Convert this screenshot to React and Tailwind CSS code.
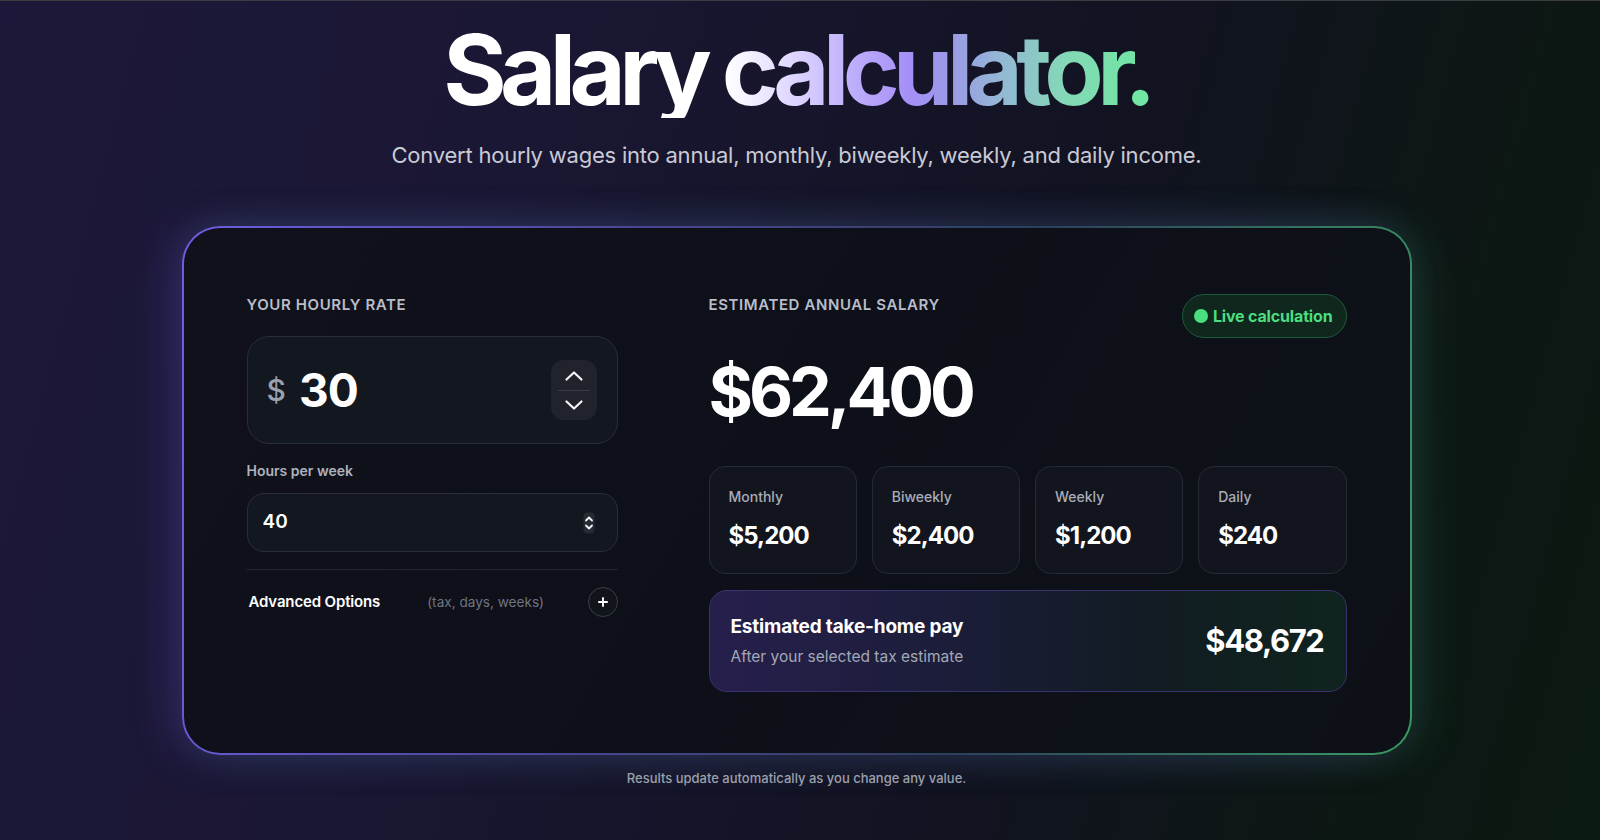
import React from 'react';
import { Plus } from 'lucide-react';

const stats = [
  { label: 'Monthly', value: '$5,200' },
  { label: 'Biweekly', value: '$2,400' },
  { label: 'Weekly', value: '$1,200' },
  { label: 'Daily', value: '$240' },
];

const Chevron = ({ down }) => (
  <svg width="20" height="12" viewBox="0 0 20 12" fill="none">
    <path
      d={down ? 'M2.5 2.5 L10 9.5 L17.5 2.5' : 'M2.5 9.5 L10 2.5 L17.5 9.5'}
      stroke="#f4f5f8"
      strokeWidth="2.2"
      strokeLinecap="round"
      strokeLinejoin="round"
    />
  </svg>
);

const TinySpinner = () => (
  <svg width="12" height="22" viewBox="0 0 12 22" fill="none">
    <rect x="0.5" y="0.5" width="11" height="21" rx="4" fill="#272a33" />
    <path d="M3 8.5 L6 5.5 L9 8.5" stroke="#f1f3f7" strokeWidth="1.8" strokeLinecap="round" strokeLinejoin="round" />
    <path d="M3 13.5 L6 16.5 L9 13.5" stroke="#f1f3f7" strokeWidth="1.8" strokeLinecap="round" strokeLinejoin="round" />
  </svg>
);

const App = () => {
  return (
    <div className="min-h-[840px] w-full border-t border-[#3b3b42] bg-[linear-gradient(105deg,#1d1839_0%,#1a1734_30%,#121322_62%,#0d1714_85%,#0b1a12_100%)] pr-[7px] font-['Inter',sans-serif] text-white">
      {/* Heading */}
      <div className="flex flex-col items-center pt-[20px]">
        <h1 className="bg-[linear-gradient(90deg,#ffffff_0%,#ffffff_40%,#e0d8ff_49%,#bba9fb_59%,#a58ff7_66%,#9b9be6_72%,#93b8d4_79%,#84d8b6_88%,#6ee7a0_100%)] bg-clip-text text-[97px] font-bold leading-[97px] tracking-[-0.068em] text-transparent">
          Salary calculator.
        </h1>
        <p className="mt-[23px] text-[22px] leading-[28px] tracking-[-0.01em] text-[#c9cad6]">
          Convert hourly wages into annual, monthly, biweekly, weekly, and daily income.
        </p>
      </div>

      {/* Card */}
      <div className="mx-auto mt-[57px] w-[1230px] rounded-[38px] bg-[linear-gradient(100deg,#6e5de2_0%,#4a4694_35%,#2d3f5c_65%,#3a9b63_100%)] p-[2px] shadow-[-14px_0_40px_rgba(110,92,230,0.22),14px_0_40px_rgba(58,160,100,0.18)]">
        <div className="grid h-[525px] grid-cols-[371px_1fr] gap-[91px] rounded-[36px] bg-[linear-gradient(120deg,#10111b_0%,#0e1019_50%,#0d1117_100%)] px-[63px] pt-[67px]">
          {/* Left column */}
          <div className="flex flex-col">
            <div className="text-[15px] font-semibold leading-5 tracking-[0.04em] text-[#b9bdc9]">YOUR HOURLY RATE</div>

            <div className="mt-[21px] flex h-[108px] items-center rounded-[22px] border border-[#2a2e38] bg-[#131720] pl-[19px] pr-[20px]">
              <span className="text-[30px] font-medium text-[#9aa0ae]">$</span>
              <span className="ml-[13px] text-[46px] font-bold tracking-[-0.02em] text-white">30</span>
              <div className="ml-auto flex h-[60px] w-[46px] flex-col items-center justify-center rounded-[13px] bg-[#20232c]">
                <Chevron />
                <div className="my-[8px] h-px w-[32px] bg-[#3a3d46]" />
                <Chevron down />
              </div>
            </div>

            <div className="mt-[17px] text-[14px] font-semibold leading-5 text-[#aeb2be]">Hours per week</div>

            <div className="mt-3 flex h-[59px] items-center rounded-[17px] border border-[#2a2e38] bg-[#131720] pl-[15px] pr-[22px]">
              <span className="text-[19px] font-semibold text-white">40</span>
              <div className="ml-auto">
                <TinySpinner />
              </div>
            </div>

            <div className="mt-[17px] h-px bg-[#23262f]" />

            <div className="mt-[17px] flex h-[30px] items-center">
              <span className="pl-[2px] text-[15px] font-semibold tracking-[-0.01em] text-white">Advanced Options</span>
              <span className="ml-[47px] text-[13.6px] text-[#6f7482]">(tax, days, weeks)</span>
              <button className="ml-auto flex h-[30px] w-[30px] items-center justify-center rounded-full border border-[#3b3f48] bg-[#11141b]">
                <Plus size={14} strokeWidth={3.2} className="text-white" />
              </button>
            </div>
          </div>

          {/* Right column */}
          <div className="flex flex-col">
            <div className="flex items-start justify-between">
              <div className="text-[15px] font-semibold leading-5 tracking-[0.04em] text-[#b9bdc9]">ESTIMATED ANNUAL SALARY</div>
              <div className="-mt-px flex h-[44px] items-center gap-[5px] rounded-full border border-[#1f5a3b] bg-[#0f271c] pl-[11px] pr-[13px]">
                <span className="h-[14px] w-[14px] rounded-full bg-[#4ade80]" />
                <span className="text-[16px] font-bold tracking-[-0.01em] text-[#4ade80]">Live calculation</span>
              </div>
            </div>

            <div className="mt-[18px] text-[68px] font-bold leading-[70px] tracking-[-0.06em] text-white">$62,400</div>

            <div className="mt-[40px] grid grid-cols-4 gap-[15px]">
              {stats.map((s) => (
                <div key={s.label} className="h-[108px] rounded-[16px] border border-[#262a34] bg-[#12151d] px-[19px] pt-[20px]">
                  <div className="text-[14px] font-medium leading-5 text-[#a8adb9]">{s.label}</div>
                  <div className="mt-[14px] text-[24px] font-bold leading-[30px] tracking-[-0.04em] text-white">{s.value}</div>
                </div>
              ))}
            </div>

            <div className="mt-4 flex h-[102px] items-center justify-between rounded-[18px] border border-[#38336e] bg-[linear-gradient(90deg,#261f4c_0%,#1b1d38_40%,#111c22_70%,#10241f_100%)] pl-[21px] pr-[22px]">
              <div>
                <div className="text-[19px] font-bold leading-[26px] tracking-[-0.01em] text-white">Estimated take-home pay</div>
                <div className="mt-[6px] text-[15.5px] leading-[22px] text-[#a3a8b6]">After your selected tax estimate</div>
              </div>
              <div className="text-[31px] font-bold tracking-[-0.045em] text-white">$48,672</div>
            </div>
          </div>
        </div>
      </div>

      <p className="mt-[14px] text-center text-[13px] font-medium leading-[18px] text-[#9ca0ab]">
        Results update automatically as you change any value.
      </p>
    </div>
  );
};

export default App;
